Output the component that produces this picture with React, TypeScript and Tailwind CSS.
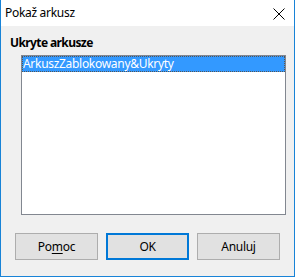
import React from "react";

export default function App() {
  const font = { fontFamily: '"Segoe UI", "Noto Sans", "Open Sans", sans-serif' };
  return (
    <div
      className="w-[295px] h-[277px] flex flex-col border-x border-b border-[#1883d7] bg-[#f0f0f0] text-[12px] text-black overflow-hidden tracking-[-0.3px]"
      style={font}
    >
      <div className="h-[26px] bg-white flex items-center justify-between pl-[4px] pr-[9px] shrink-0">
        <span className="leading-[16px]">Pokaž arkusz</span>
        <svg width="12" height="12" viewBox="0 0 12 12" className="mt-[1px]">
          <path d="M0.5 0.5 L11.5 11.5 M11.5 0.5 L0.5 11.5" stroke="#000" strokeWidth="1" />
        </svg>
      </div>
      <div className="flex flex-col flex-1">
        <div className="mt-[9px] ml-[9px] font-bold leading-[16px] tracking-[-0.6px]">Ukryte arkusze</div>
        <div className="mt-[4px] ml-[20px] mr-[8px] h-[160px] bg-white border border-[#828790] p-0">
          <div className="h-[16px] bg-[#3399ff] text-white leading-[15px] pl-[1px] outline-1 outline-dotted outline-[#555] -outline-offset-1">
            ArkuszZablokowany&amp;Ukryty
          </div>
        </div>
        <div className="mt-[18px] ml-[14px] flex gap-[8px]">
          <button className="w-[83px] h-[27px] bg-[#e1e1e1] border border-[#adadad] leading-none">
            Po<span className="underline underline-offset-2">m</span>oc
          </button>
          <button className="w-[83px] h-[27px] bg-[#e1e1e1] border-2 border-[#0078d7] leading-none">
            OK
          </button>
          <button className="w-[83px] h-[27px] bg-[#e1e1e1] border border-[#adadad] leading-none">
            Anuluj
          </button>
        </div>
      </div>
    </div>
  );
}
